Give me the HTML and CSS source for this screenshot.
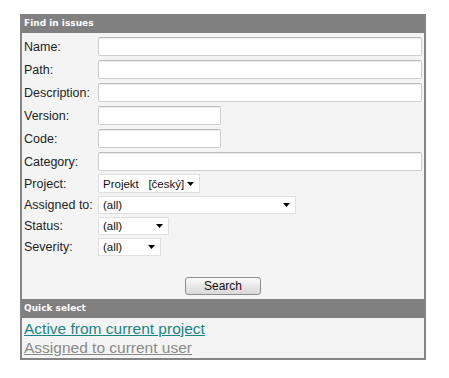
FILE: index.html
```html
<!DOCTYPE html>
<html>
<head>
<meta charset="utf-8">
<link rel="stylesheet" href="styles.css">
</head>
<body>
<div class="panel">
  <div class="panel-head">Find in issues</div>
  <form class="search-form">
    <div class="row"><label class="lbl">Name:</label><input class="field w-full" type="text"></div>
    <div class="row"><label class="lbl">Path:</label><input class="field w-full" type="text"></div>
    <div class="row"><label class="lbl">Description:</label><input class="field w-full" type="text"></div>
    <div class="row"><label class="lbl">Version:</label><input class="field w-mid" type="text"></div>
    <div class="row"><label class="lbl">Code:</label><input class="field w-mid" type="text"></div>
    <div class="row"><label class="lbl">Category:</label><input class="field w-full" type="text"></div>
    <div class="row row-sel row-first-sel"><label class="lbl">Project:</label>
      <div class="sel sel-project"><span class="sel-text">Projekt&nbsp;&nbsp; [český]</span><svg class="arrow" width="7" height="4" viewBox="0 0 7 4"><path d="M0 0H7L3.5 4Z" fill="#000"/></svg></div>
    </div>
    <div class="row row-sel"><label class="lbl">Assigned to:</label>
      <div class="sel sel-assigned"><span class="sel-text">(all)</span><svg class="arrow" width="7" height="4" viewBox="0 0 7 4"><path d="M0 0H7L3.5 4Z" fill="#000"/></svg></div>
    </div>
    <div class="row row-sel"><label class="lbl">Status:</label>
      <div class="sel sel-status"><span class="sel-text">(all)</span><svg class="arrow" width="7" height="4" viewBox="0 0 7 4"><path d="M0 0H7L3.5 4Z" fill="#000"/></svg></div>
    </div>
    <div class="row row-sel"><label class="lbl">Severity:</label>
      <div class="sel sel-severity"><span class="sel-text">(all)</span><svg class="arrow" width="7" height="4" viewBox="0 0 7 4"><path d="M0 0H7L3.5 4Z" fill="#000"/></svg></div>
    </div>
    <div class="actions"><button class="btn" type="button">Search</button></div>
  </form>
  <div class="panel-head panel-head-quick">Quick select</div>
  <div class="quick">
    <a class="qlink qlink-active" href="#">Active from current project</a>
    <a class="qlink qlink-user" href="#">Assigned to current user</a>
  </div>
</div>
</body>
</html>
```

FILE: styles.css
```css
* { box-sizing: border-box; }
html, body { margin: 0; padding: 0; background: #fff; }
body { font-family: "Liberation Sans", Arial, sans-serif; color: #222; }

.panel {
  margin: 14px 0 0 20px;
  width: 406px;
  border: 2px solid #858585;
  border-top: 0;
  background: #f4f4f4;
}

.panel-head {
  height: 19px;
  background: #808080;
  color: #fff;
  font-family: "DejaVu Sans", Verdana, sans-serif;
  font-weight: bold;
  font-size: 9px;
  line-height: 19px;
  padding-left: 2px;
}

.search-form {
  padding: 4px 2px 0 2px;
  display: flex;
  flex-direction: column;
  gap: 4px;
}

.row {
  display: flex;
  align-items: center;
  height: 19px;
}
.row-sel { height: 18px; margin-top: -1px; }
.row-first-sel { height: 19px; margin-top: -1px; }

.lbl {
  width: 74px;
  flex: none;
  font-size: 12.5px;
  color: #1e1e1e;
  white-space: nowrap;
}

.field {
  height: 19px;
  border: 1px solid #cfcfcf;
  border-top-color: #bcbcbc;
  border-radius: 2px;
  background: #fff;
  box-shadow: inset 0 1px 0 #ececec;
  padding: 0 3px;
  font: 12px "Liberation Sans", Arial, sans-serif;
  outline: none;
}
.w-full { width: 324px; }
.w-mid { width: 123px; }

.sel {
  height: 100%;
  display: flex;
  align-items: center;
  justify-content: space-between;
  background: #fff;
  border: 1px solid #e0e0e0;
  padding: 0 5px 0 4px;
  font-size: 11.5px;
  color: #111;
}
.sel-project { width: 102px; }
.sel-assigned { width: 198px; }
.sel-status { width: 71px; }
.sel-severity { width: 63px; }
.arrow { flex: none; }

.actions {
  display: flex;
  justify-content: center;
  padding-top: 17px;
}
.btn {
  width: 76px;
  height: 18px;
  border: 1px solid #8e8e8e;
  border-radius: 3px;
  background: linear-gradient(#fbfbfb, #e6e6e6 55%, #d9d9d9);
  font: 12px "Liberation Sans", Arial, sans-serif;
  color: #111;
  padding: 0;
  line-height: 16px;
}

.panel-head-quick { margin-top: 4px; }

.quick {
  display: flex;
  flex-direction: column;
  padding: 1px 2px 1px;
}
.qlink {
  font-size: 15.5px;
  line-height: 19px;
  text-decoration: underline;
}
.qlink-active { color: #1b8585; }
.qlink-user { color: #8a8a8a; }
```
